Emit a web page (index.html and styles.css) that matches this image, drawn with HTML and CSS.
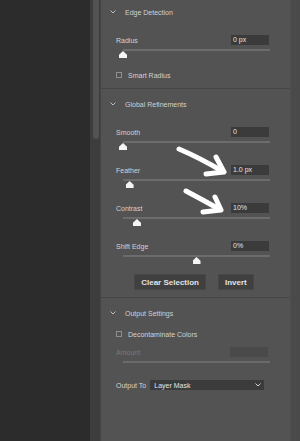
FILE: index.html
```html
<!DOCTYPE html>
<html lang="en">
<head>
  <meta charset="UTF-8">
  <title>Select and Mask - Properties</title>
  <link rel="stylesheet" href="styles.css">
</head>
<body>
  <div class="app">
    <div class="canvas"></div>
    <div class="scrollbar"><div class="scroll-thumb"></div></div>

    <div class="panel">

      <section class="group">
        <div class="group-head">
          <svg class="chev" width="6" height="4" viewBox="0 0 6 4"><path d="M0.5 0.5 L3 3 L5.5 0.5" fill="none" stroke="#bdbdbd" stroke-width="1"/></svg>
          <span>Edge Detection</span>
        </div>
        <div class="field">
          <div class="field-row">
            <label>Radius</label>
            <div class="value-box">0 px</div>
          </div>
          <div class="track"><div class="knob" style="left: 0%"></div></div>
        </div>
        <div class="check-row smart">
          <span class="checkbox"></span>
          <span>Smart Radius</span>
        </div>
      </section>

      <section class="group">
        <div class="group-head">
          <svg class="chev" width="6" height="4" viewBox="0 0 6 4"><path d="M0.5 0.5 L3 3 L5.5 0.5" fill="none" stroke="#bdbdbd" stroke-width="1"/></svg>
          <span>Global Refinements</span>
        </div>
        <div class="field">
          <div class="field-row">
            <label>Smooth</label>
            <div class="value-box">0</div>
          </div>
          <div class="track"><div class="knob" style="left: 0%"></div></div>
        </div>
        <div class="field">
          <div class="field-row">
            <label>Feather</label>
            <div class="value-box">1.0 px</div>
          </div>
          <div class="track"><div class="knob" style="left: 4.5%"></div></div>
        </div>
        <div class="field">
          <div class="field-row">
            <label>Contrast</label>
            <div class="value-box">10%</div>
          </div>
          <div class="track"><div class="knob" style="left: 9.5%"></div></div>
        </div>
        <div class="field">
          <div class="field-row">
            <label>Shift Edge</label>
            <div class="value-box">0%</div>
          </div>
          <div class="track"><div class="knob" style="left: 50%"></div></div>
        </div>
        <div class="btn-row">
          <button class="btn">Clear Selection</button>
          <button class="btn">Invert</button>
        </div>
      </section>

      <section class="group last">
        <div class="group-head">
          <svg class="chev" width="6" height="4" viewBox="0 0 6 4"><path d="M0.5 0.5 L3 3 L5.5 0.5" fill="none" stroke="#bdbdbd" stroke-width="1"/></svg>
          <span>Output Settings</span>
        </div>
        <div class="check-row">
          <span class="checkbox"></span>
          <span>Decontaminate Colors</span>
        </div>
        <div class="field disabled">
          <div class="field-row">
            <label>Amount</label>
            <div class="value-box"></div>
          </div>
          <div class="track"></div>
        </div>
        <div class="output-row">
          <label>Output To</label>
          <div class="select">
            <span>Layer Mask</span>
            <svg width="6" height="4" viewBox="0 0 6 4"><path d="M0.5 0.5 L3 3 L5.5 0.5" fill="none" stroke="#d0d0d0" stroke-width="1"/></svg>
          </div>
        </div>
      </section>

    </div>
    <div class="edge"></div>
  </div>

  <svg class="arrows" width="300" height="441" viewBox="0 0 300 441">
    <g fill="none" stroke="#ffffff" stroke-width="5" stroke-linecap="round" stroke-linejoin="round">
      <path d="M179 149 Q200 158 222 171"/>
      <path d="M216 157 L224 172 L206 174"/>
      <path d="M186 191 Q203 200 219 209"/>
      <path d="M215 197 L221 210 L203 212"/>
    </g>
  </svg>
</body>
</html>
```

FILE: styles.css
```css
body {
  margin: 0;
  background-color: #2c2c2c;
  font-family: 'Liberation Sans', Arial, sans-serif;
  font-size: 7px;
  color: #d2d2d2;
  overflow: hidden;
}

.app {
  display: flex;
  height: 441px;
}

.canvas {
  width: 90px;
  background-color: #2c2c2c;
}

.scrollbar {
  width: 10px;
  background-color: #3d3d3d;
  padding-left: 3px;
  box-sizing: border-box;
}

.scroll-thumb {
  width: 6px;
  height: 139px;
  background-color: #535353;
  border-radius: 0 0 3px 3px;
}

.panel {
  flex: 1;
  background-color: #535353;
  border-left: 1px solid #454545;
  padding: 0 20px 0 15px;
  margin-top: -3px;
}

.edge {
  width: 10px;
  background-color: #4a4a4a;
  border-left: 1px solid #4f4f4f;
  box-sizing: border-box;
}

.group {
  margin: 0 -20px 0 -15px;
  padding: 0 20px 7px 15px;
  border-bottom: 1px solid #464646;
}

.group.last {
  border-bottom: none;
}

.group-head {
  height: 30px;
  display: flex;
  align-items: center;
  margin-left: -6px;
  color: #d0d0d0;
}

.chev {
  margin-right: 9px;
}

.field {
  position: relative;
  margin-top: 8px;
  padding-bottom: 22px;
}

.field + .field {
  margin-top: 0;
}

.field-row {
  display: flex;
  justify-content: space-between;
  align-items: center;
  height: 10px;
}

.value-box {
  width: 38px;
  height: 10px;
  box-sizing: border-box;
  background-color: #3b3b3b;
  color: #e4e4e4;
  padding-left: 2px;
  line-height: 10px;
  margin-right: 1px;
}

.track {
  position: relative;
  margin: 4px 0 0 7px;
  height: 2px;
  background-color: #6c6c6c;
}

.knob {
  position: absolute;
  top: 2px;
  width: 8px;
  height: 7px;
  margin-left: -4px;
  background-color: #f4f4f4;
  clip-path: polygon(50% 0, 100% 55%, 100% 100%, 0 100%, 0 55%);
}

.check-row {
  display: flex;
  align-items: center;
  height: 10px;
  gap: 6px;
  margin-top: 1px;
}

.check-row.smart {
  margin: -3px 0 1px 0;
}

.checkbox {
  width: 6px;
  height: 6px;
  border: 1px solid #8e8e8e;
  box-sizing: border-box;
}

.btn-row {
  display: flex;
  justify-content: center;
  gap: 12px;
  margin: -5px 0 0 2px;
}

.btn {
  height: 16px;
  padding: 0 6px;
  background-color: #404040;
  border: 1px solid #474747;
  color: #e2e2e2;
  font-family: 'Liberation Sans', Arial, sans-serif;
  font-size: 8px;
  font-weight: bold;
}

.field.disabled {
  margin-top: 8px;
  padding-bottom: 0;
}

.field.disabled label {
  color: #7a7a7a;
}

.field.disabled .value-box {
  background-color: #4a4a4a;
  margin-right: 2px;
}

.field.disabled .track {
  background-color: #6a6a6a;
}

.output-row {
  display: flex;
  align-items: center;
  gap: 4px;
  margin-top: 17px;
}

.select {
  display: flex;
  justify-content: space-between;
  align-items: center;
  width: 114px;
  height: 10px;
  box-sizing: border-box;
  padding: 0 3px 0 4px;
  background-color: #3b3b3b;
  color: #e4e4e4;
}

.arrows {
  position: absolute;
  top: 0;
  left: 0;
  pointer-events: none;
}
```
